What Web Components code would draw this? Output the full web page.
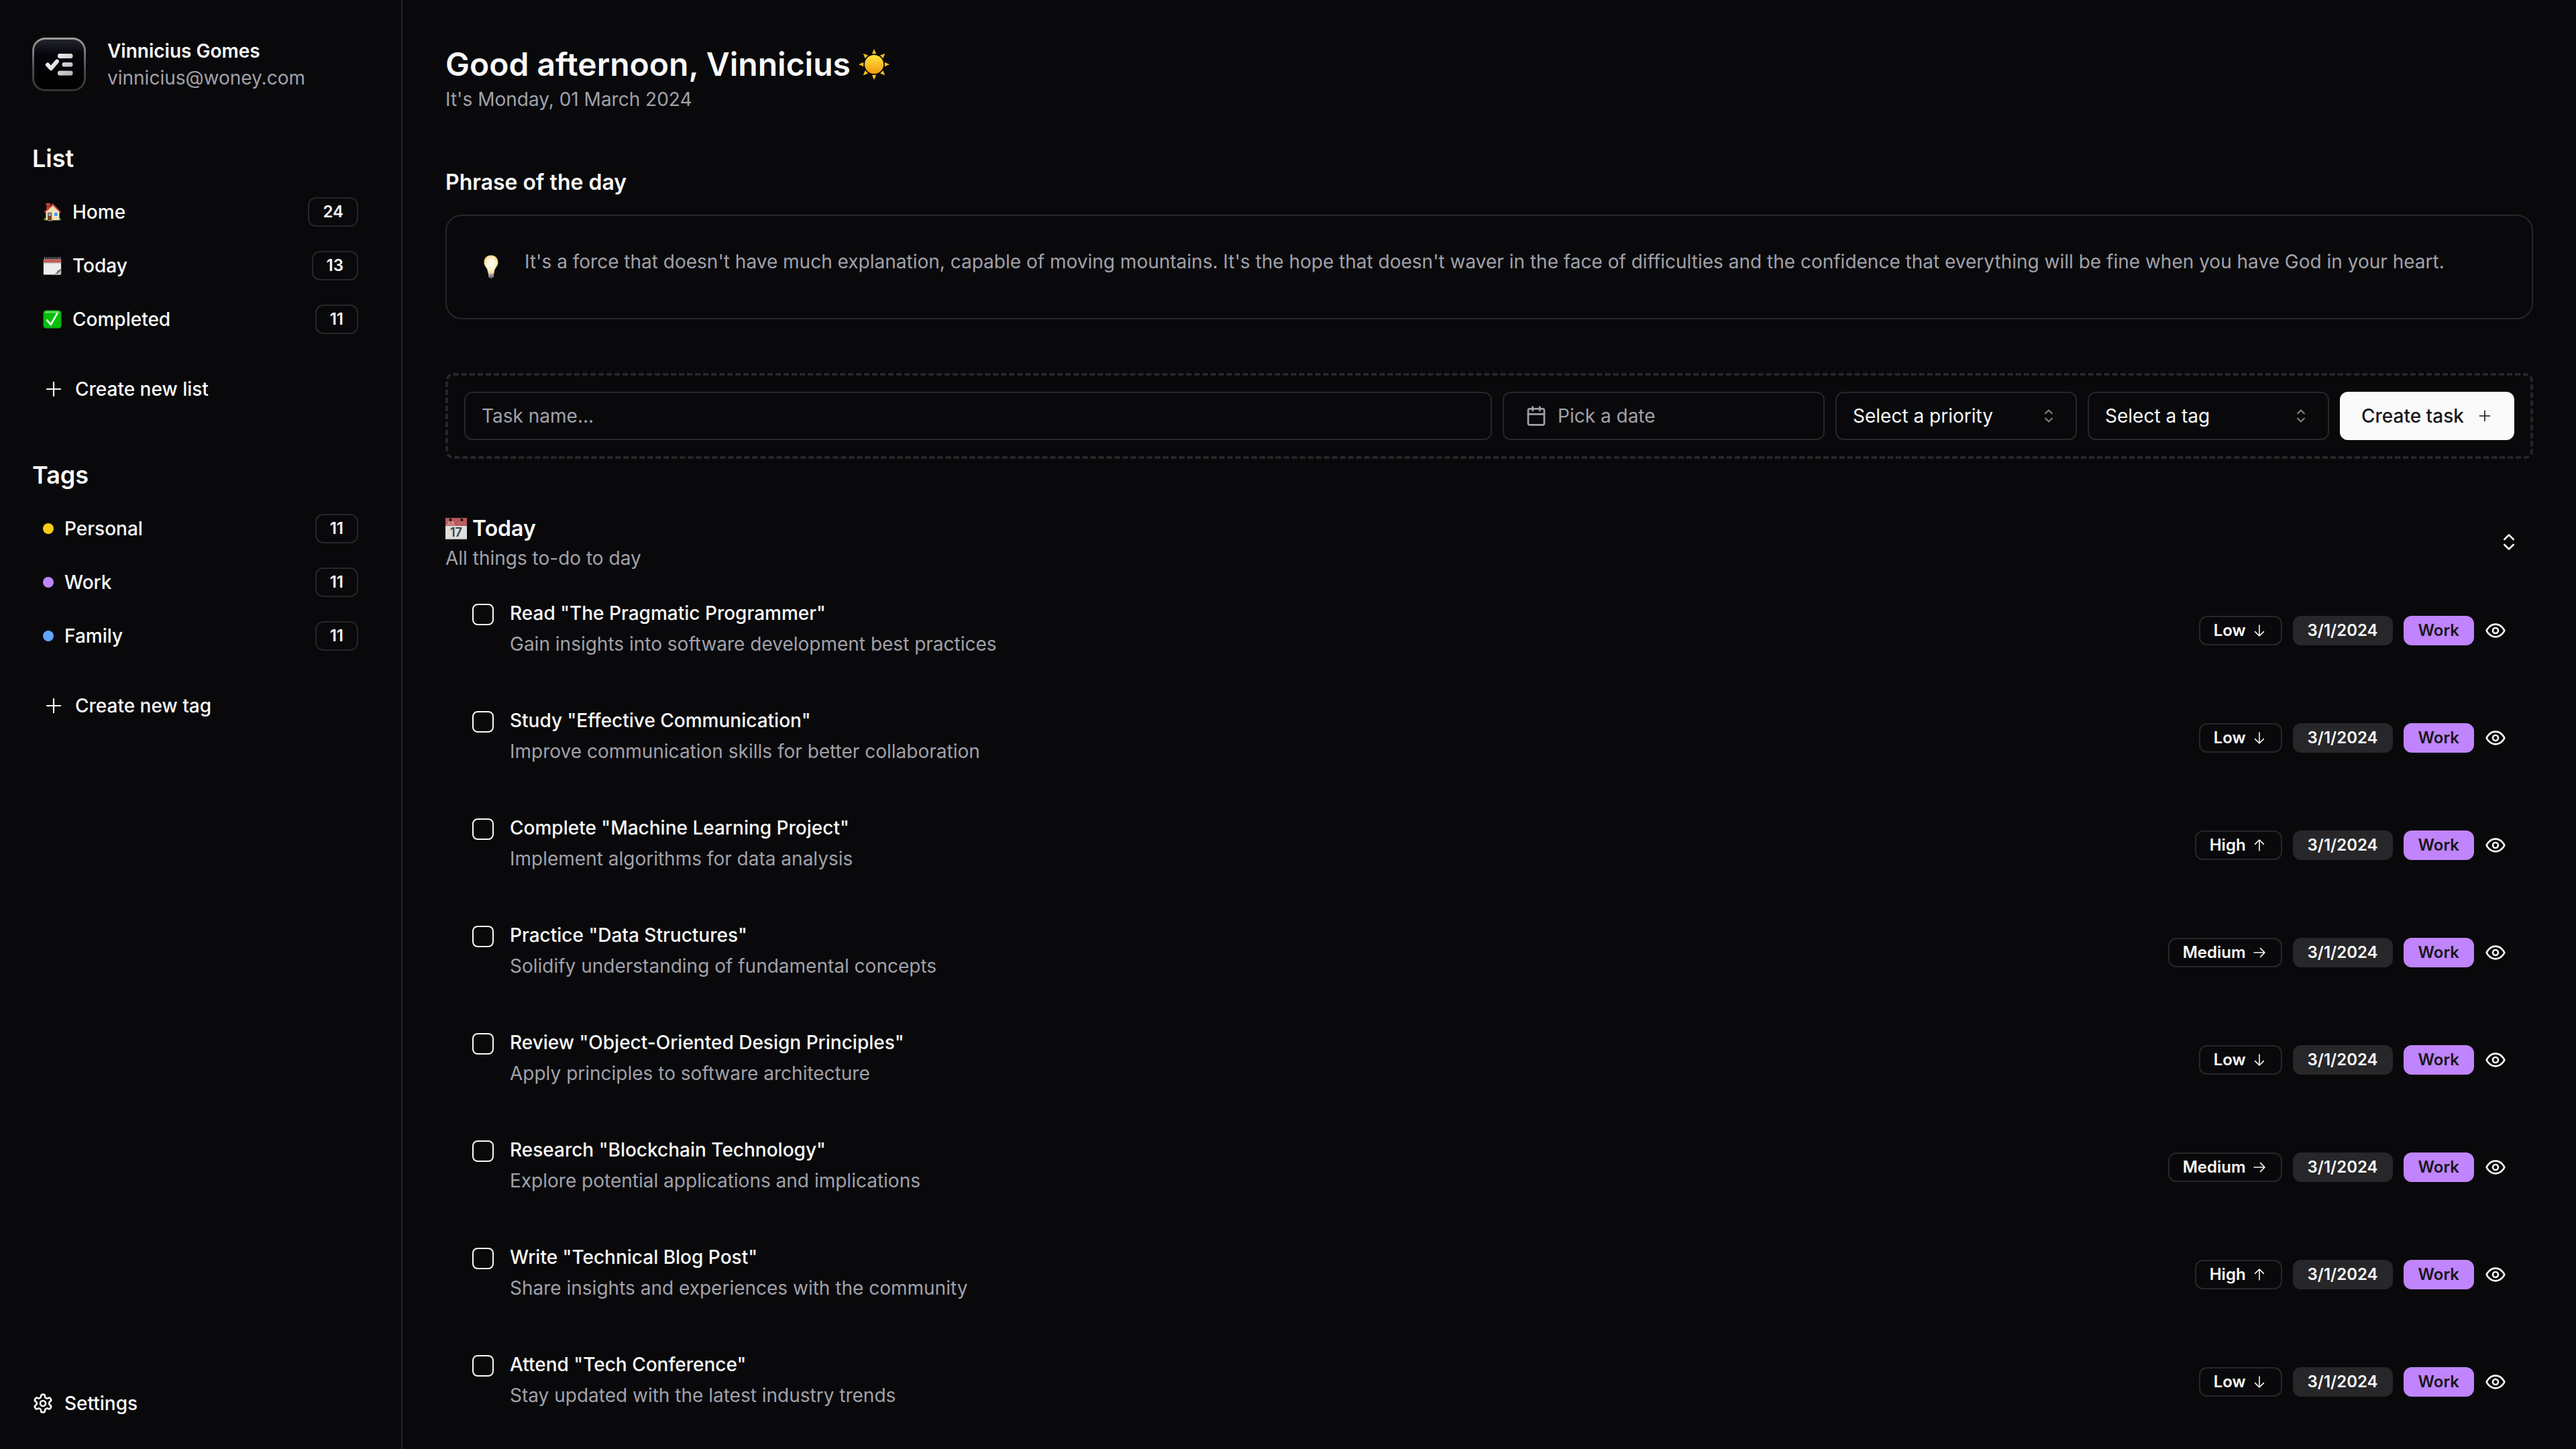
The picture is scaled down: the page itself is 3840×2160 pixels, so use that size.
<!DOCTYPE html>
<html lang="en">
<head>
<meta charset="utf-8">
<title>Tasks</title>
<style>
  html, body { height: 100%; }
  body {
    margin: 0;
    background: #09090b;
    color: #fafafa;
    font: 400 28px/40px Inter, "Liberation Sans", sans-serif;
    --border: #27272a;
    --muted: #a1a1aa;
    --text: #fafafa;
  }
</style>
</head>
<body>
<task-app>
  <app-sidebar slot="sidebar">
    <user-card slot="user" name="Vinnicius Gomes" email="vinnicius@woney.com"></user-card>
    <nav-group heading="List" action="Create new list">
      <nav-item count="24"><ui-icon slot="icon" name="home" size="28"></ui-icon>Home</nav-item>
      <nav-item count="13"><ui-icon slot="icon" name="notepad" size="28"></ui-icon>Today</nav-item>
      <nav-item count="11"><ui-icon slot="icon" name="done" size="28"></ui-icon>Completed</nav-item>
    </nav-group>
    <nav-group heading="Tags" action="Create new tag">
      <nav-item count="11"><color-dot slot="icon" color="#facc15"></color-dot>Personal</nav-item>
      <nav-item count="11"><color-dot slot="icon" color="#c084fc"></color-dot>Work</nav-item>
      <nav-item count="11"><color-dot slot="icon" color="#60a5fa"></color-dot>Family</nav-item>
    </nav-group>
  </app-sidebar>

  <page-greeting heading="Good afternoon, Vinnicius" icon="sun">It's Monday, 01 March 2024</page-greeting>
  <phrase-card heading="Phrase of the day">It's a force that doesn't have much explanation, capable of moving mountains. It's the hope that doesn't waver in the face of difficulties and the confidence that everything will be fine when you have God in your heart.</phrase-card>
  <task-form></task-form>
  <task-list heading="Today" description="All things to-do to day">
    <task-item priority="Low" date="3/1/2024" tag="Work" heading='Read "The Pragmatic Programmer"'>Gain insights into software development best practices</task-item>
    <task-item priority="Low" date="3/1/2024" tag="Work" heading='Study "Effective Communication"'>Improve communication skills for better collaboration</task-item>
    <task-item priority="High" date="3/1/2024" tag="Work" heading='Complete "Machine Learning Project"'>Implement algorithms for data analysis</task-item>
    <task-item priority="Medium" date="3/1/2024" tag="Work" heading='Practice "Data Structures"'>Solidify understanding of fundamental concepts</task-item>
    <task-item priority="Low" date="3/1/2024" tag="Work" heading='Review "Object-Oriented Design Principles"'>Apply principles to software architecture</task-item>
    <task-item priority="Medium" date="3/1/2024" tag="Work" heading='Research "Blockchain Technology"'>Explore potential applications and implications</task-item>
    <task-item priority="High" date="3/1/2024" tag="Work" heading='Write "Technical Blog Post"'>Share insights and experiences with the community</task-item>
    <task-item priority="Low" date="3/1/2024" tag="Work" heading='Attend "Tech Conference"'>Stay updated with the latest industry trends</task-item>
  </task-list>
</task-app>

<script>
const RESET = `
  *, *::before, *::after { box-sizing: border-box; }
  h1, h2, h3, p { margin: 0; }
  a { color: inherit; text-decoration: none; }
  button, input, select { font: inherit; color: inherit; background: none; border: 0; margin: 0; padding: 0; }
  button { cursor: pointer; }
`;

class Base extends HTMLElement {
  connectedCallback() {
    if (this.shadowRoot) return;
    const root = this.attachShadow({ mode: 'open' });
    root.innerHTML = `<style>${RESET}${this.styles()}</style>${this.view()}`;
  }
  attr(name) {
    return (this.getAttribute(name) || '').replace(/&/g, '&amp;').replace(/</g, '&lt;');
  }
  styles() { return ':host { display: block; }'; }
  view() { return '<slot></slot>'; }
}

/* Line icons use a 24 unit box, thin icons a 15 unit box, pictograms a 32 unit box. */
const line = d => ({ box: 24, body: `<g fill="none" stroke="currentColor" stroke-width="2" stroke-linecap="round" stroke-linejoin="round">${d}</g>` });
const thin = d => ({ box: 15, body: `<g fill="none" stroke="currentColor" stroke-width="1" stroke-linecap="round" stroke-linejoin="round">${d}</g>` });
const art = d => ({ box: 32, body: d });

const ICONS = {
  plus: thin('<path d="M7.5 2.75v9.5M2.75 7.5h9.5"/>'),
  caret: thin('<path d="M5.25 5.75 7.5 3.5l2.25 2.25M5.25 9.25 7.5 11.5l2.25-2.25"/>'),
  Low: thin('<path d="M7.5 2.5v10M3.5 8.5l4 4 4-4"/>'),
  High: thin('<path d="M7.5 12.5v-10M3.5 6.5l4-4 4 4"/>'),
  Medium: thin('<path d="M2.5 7.5h10M8.5 3.5l4 4-4 4"/>'),
  chevrons: line('<path d="m7 15 5 5 5-5M7 9l5-5 5 5"/>'),
  eye: line('<path d="M2 12s3-7 10-7 10 7 10 7-3 7-10 7-10-7-10-7Z"/><circle cx="12" cy="12" r="3"/>'),
  calendar: line('<rect x="3" y="4" width="18" height="18" rx="2"/><path d="M16 2v4M8 2v4M3 10h18"/>'),
  settings: line('<path d="M12.22 2h-.44a2 2 0 0 0-2 2v.18a2 2 0 0 1-1 1.73l-.43.25a2 2 0 0 1-2 0l-.15-.08a2 2 0 0 0-2.73.73l-.22.38a2 2 0 0 0 .73 2.73l.15.1a2 2 0 0 1 1 1.72v.51a2 2 0 0 1-1 1.74l-.15.09a2 2 0 0 0-.73 2.73l.22.38a2 2 0 0 0 2.73.73l.15-.08a2 2 0 0 1 2 0l.43.25a2 2 0 0 1 1 1.73V20a2 2 0 0 0 2 2h.44a2 2 0 0 0 2-2v-.18a2 2 0 0 1 1-1.73l.43-.25a2 2 0 0 1 2 0l.15.08a2 2 0 0 0 2.73-.73l.22-.39a2 2 0 0 0-.73-2.73l-.15-.08a2 2 0 0 1-1-1.74v-.5a2 2 0 0 1 1-1.74l.15-.09a2 2 0 0 0 .73-2.73l-.22-.38a2 2 0 0 0-2.73-.73l-.15.08a2 2 0 0 1-2 0l-.43-.25a2 2 0 0 1-1-1.73V4a2 2 0 0 0-2-2z"/><circle cx="12" cy="12" r="3"/>'),
  home: art(`
    <path d="M1 30q0-4 3-4h24q3 0 3 4z" fill="#4c8a2b"/>
    <path d="M6 2h6v8l-6 4z" fill="#a83a2c"/><path d="M5 1h8v3H5z" fill="#c14a38"/>
    <path d="M5 15 17 4l11 11v15H5z" fill="#f3dfb4"/>
    <path d="M1.500 16 17 1.500 31 16l-1.500 1.500L17 5 3 17.500z" fill="#c9402f"/>
    <rect x="8" y="17" width="7" height="13" fill="#7a4322"/><rect x="9.500" y="18.500" width="4" height="4" fill="#8ec5e8"/>
    <rect x="18" y="16" width="8" height="8" fill="#fff"/><rect x="19" y="17" width="6" height="6" fill="#4f9fd8"/>
    <path d="M8 30h8v1.500H8z" fill="#8b8b8b"/>`),
  notepad: art(`
    <path d="M1 5h30v23.500q-1 2-3 3H1z" fill="#ededed"/>
    <path d="M1 5h30v6H1z" fill="#c25b56"/>
    <path d="M1 11h30v1H1z" fill="#a8a8a8"/>
    <path d="M31 20q-2 4-6 4-2 7-8 7.500h14z" fill="#c9c9c9"/>
    <path d="M31 20q-2 4-6 4-2 6-7 7.500 9-1 13-8z" fill="#777"/>
    <path d="M3 1v5M6 1v5M9 1v5M12 1v5M15 1v5M18 1v5M21 1v5M24 1v5M27 1v5M29.500 1v5" stroke="#8d8d8d" stroke-width="1.200"/>`),
  done: art(`
    <rect x=".5" y=".5" width="31" height="31" rx="5" fill="#08a60c"/>
    <rect x="2" y="2" width="28" height="28" rx="4" fill="#06bf0b"/>
    <path d="M3 6q0-4 4-4h18q4 0 4 4-13-2-26 0z" fill="#5fdc5f"/>
    <path d="M7 17.500 13.500 25 24 6.500" fill="none" stroke="#fff" stroke-width="3" stroke-linecap="round" stroke-linejoin="round"/>`),
  sun: art(`
    <defs><linearGradient id="s" x1="0" y1="0" x2="0" y2="1"><stop offset="0" stop-color="#ffe53a"/><stop offset="1" stop-color="#f19a12"/></linearGradient></defs>
    <g fill="#f9bd22"><path d="m16 0 2.200 5h-4.400z"/>
    <path d="m16 0 2.200 5h-4.400z" transform="rotate(45 16 16)"/><path d="m16 0 2.200 5h-4.400z" transform="rotate(90 16 16)"/>
    <path d="m16 0 2.200 5h-4.400z" transform="rotate(135 16 16)"/><path d="m16 0 2.200 5h-4.400z" transform="rotate(180 16 16)"/>
    <path d="m16 0 2.200 5h-4.400z" transform="rotate(225 16 16)"/><path d="m16 0 2.200 5h-4.400z" transform="rotate(270 16 16)"/>
    <path d="m16 0 2.200 5h-4.400z" transform="rotate(315 16 16)"/></g>
    <circle cx="16" cy="16" r="9.800" fill="url(#s)"/>`),
  bulb: art(`
    <defs><radialGradient id="b" cx=".5" cy=".5" r=".55"><stop offset="0" stop-color="#fffdf3"/><stop offset=".6" stop-color="#fff3cf"/><stop offset="1" stop-color="#f2cf72"/></radialGradient>
    <linearGradient id="c" x1="0" y1="0" x2="0" y2="1"><stop offset="0" stop-color="#d8d3cc"/><stop offset="1" stop-color="#4a4846"/></linearGradient></defs>
    <path d="M12.400 24h7.200v4.500q0 1.500-1.800 2-1.800 1.800-3.600 0-1.800-.5-1.800-2z" fill="url(#c)"/>
    <path d="M16 .5c5.600 0 9.300 4.200 9.300 9.200 0 4.300-2.800 6.300-4.100 9.300-.9 2-.8 3.500-1.200 5.200h-8c-.4-1.700-.3-3.200-1.200-5.200-1.300-3-4.100-5-4.100-9.300C6.700 4.700 10.400.5 16 .5z" fill="url(#b)"/>
    <path d="M12.400 26.300h7.200M12.600 28.300h6.800" stroke="#8d8984" stroke-width=".6"/>`),
  date: art(`
    <rect width="32" height="32" fill="#dedede"/><rect width="32" height="12" fill="#b5595a"/>
    <path d="M0 30.500h32V32H0z" fill="#c4c4c4"/>
    <circle cx="7.500" cy="3" r="2" fill="#1d1214"/><circle cx="24.500" cy="3" r="2" fill="#1d1214"/>
    <path d="M7.500 0v3M22.500 0l2 3" stroke="#1d1214" stroke-width="1"/>
    <path d="M18 9h12M18 7h12" stroke="#c06a6a" stroke-width="1"/>
    <text x="1.500" y="11" font-family="Inter, sans-serif" font-size="7" font-weight="600" fill="#e3b5b4">JUL</text>
    <text x="16" y="28" text-anchor="middle" font-family="Inter, sans-serif" font-size="18" fill="#3d3d3f">17</text>`),
  logo: { box: 80, body: `
    <defs>
      <linearGradient id="e" x1="0" y1="0" x2="0" y2="1"><stop offset="0" stop-color="#9b9b9b"/><stop offset=".6" stop-color="#4a4a4a"/><stop offset="1" stop-color="#343434"/></linearGradient>
      <linearGradient id="f" x1="0" y1="0" x2="0" y2="1"><stop offset="0" stop-color="#262630"/><stop offset=".3" stop-color="#05050c"/><stop offset="1" stop-color="#000"/></linearGradient>
      <linearGradient id="g" gradientUnits="userSpaceOnUse" x1="22" y1="24" x2="60" y2="56"><stop offset="0" stop-color="#fff"/><stop offset="1" stop-color="#b4b4b4"/></linearGradient>
    </defs>
    <rect x="1.500" y="1.500" width="77" height="77" rx="18" fill="url(#f)" stroke="url(#e)" stroke-width="3"/>
    <g fill="url(#g)"><rect x="38" y="24" width="22.500" height="7" rx="3"/><rect x="44.500" y="37" width="16" height="6.500" rx="3"/><rect x="38" y="49.500" width="22.500" height="7" rx="3"/></g>
    <path d="m23 40.500 5 5.500 9-10.500" fill="none" stroke="url(#g)" stroke-width="6" stroke-linecap="round" stroke-linejoin="round"/>` }
};

customElements.define('ui-icon', class extends Base {
  styles() {
    const s = Number(this.getAttribute('size') || 32);
    return `:host { display: block; flex: none; width: ${s}px; height: ${s}px; } svg { display: block; width: 100%; height: 100%; }`;
  }
  view() {
    const i = ICONS[this.getAttribute('name')];
    return `<svg viewBox="0 0 ${i.box} ${i.box}" aria-hidden="true">${i.body}</svg>`;
  }
});

customElements.define('color-dot', class extends Base {
  styles() { return `:host { display: block; flex: none; width: 16px; height: 16px; border-radius: 50%; background: ${this.attr('color')}; }`; }
  view() { return ''; }
});

customElements.define('ui-badge', class extends Base {
  styles() {
    return `
      :host { display: inline-flex; align-items: center; gap: 8px; height: 44px; padding: 0 20px; border: 2px solid var(--border); border-radius: 12px;
        font-size: 24px; line-height: 32px; font-weight: 600; white-space: nowrap; }
      :host([kind="fill"]) { background: #27272a; }
      :host([kind="tag"]) { background: #c084fc; border-color: #c084fc; color: #18181b; }`;
  }
});

customElements.define('task-app', class extends Base {
  styles() {
    return `
      :host { display: grid; grid-template-columns: 600px minmax(0, 1fr); min-height: 100vh; }
      aside { border-right: 2px solid var(--border); display: flex; height: 100vh; position: sticky; top: 0; }
      ::slotted([slot="sidebar"]) { flex: 1; }
      main { padding: 64px 64px 20px; display: flex; flex-direction: column; gap: 80px; }`;
  }
  view() { return '<aside><slot name="sidebar"></slot></aside><main><slot></slot></main>'; }
});

customElements.define('app-sidebar', class extends Base {
  styles() {
    return `
      :host { display: flex; flex-direction: column; padding: 56px 48px 32px; }
      nav { display: flex; flex-direction: column; gap: 64px; margin-top: 72px; flex: 1; }
      a { display: flex; align-items: center; gap: 16px; height: 72px; font-weight: 500; }`;
  }
  view() {
    return `<slot name="user"></slot><nav aria-label="Main"><slot></slot></nav>
      <a href="#settings"><ui-icon name="settings"></ui-icon>Settings</a>`;
  }
});

customElements.define('user-card', class extends Base {
  styles() {
    return `
      :host { display: flex; align-items: center; gap: 32px; }
      .name { font-weight: 600; } .email { color: var(--muted); }`;
  }
  view() {
    return `<ui-icon name="logo" size="80"></ui-icon>
      <div><p class="name">${this.attr('name')}</p><p class="email">${this.attr('email')}</p></div>`;
  }
});

customElements.define('nav-group', class extends Base {
  styles() {
    return `
      :host { display: block; }
      h2 { font-size: 36px; line-height: 56px; font-weight: 600; margin-bottom: 16px; }
      .items { display: flex; flex-direction: column; gap: 8px; }
      button { display: flex; align-items: center; gap: 16px; height: 72px; padding: 0 16px; margin-top: 32px; font-weight: 500; }`;
  }
  view() {
    return `<h2>${this.attr('heading')}</h2><div class="items"><slot></slot></div>
      <button type="button"><ui-icon name="plus"></ui-icon>${this.attr('action')}</button>`;
  }
});

customElements.define('nav-item', class extends Base {
  styles() {
    return `
      :host { display: block; }
      a { display: flex; align-items: center; gap: 16px; height: 72px; padding: 0 16px; font-weight: 500; }
      span { flex: 1; }`;
  }
  view() {
    return `<a href="#"><slot name="icon"></slot><span><slot></slot></span><ui-badge>${this.attr('count')}</ui-badge></a>`;
  }
});

customElements.define('page-greeting', class extends Base {
  styles() {
    return `
      :host { display: block; }
      h1 { display: flex; align-items: center; gap: 12px; font-size: 48px; line-height: 64px; font-weight: 600; }
      p { color: var(--muted); }`;
  }
  view() { return `<h1>${this.attr('heading')}<ui-icon name="${this.attr('icon')}" size="46"></ui-icon></h1><p><slot></slot></p>`; }
});

customElements.define('phrase-card', class extends Base {
  styles() {
    return `
      :host { display: block; }
      h2 { font-size: 32px; line-height: 48px; font-weight: 600; margin-bottom: 24px; }
      .card { display: flex; gap: 32px; padding: 48px; border: 2px solid var(--border); border-radius: 24px; }
      .bulb { display: flex; align-items: center; height: 56px; }
      p { color: var(--muted); }`;
  }
  view() {
    return `<h2>${this.attr('heading')}</h2>
      <div class="card"><div class="bulb"><ui-icon name="bulb" size="36"></ui-icon></div><p><slot></slot></p></div>`;
  }
});

customElements.define('task-form', class extends Base {
  styles() {
    return `
      :host { display: block; }
      form { display: flex; gap: 16px; padding: 24px; border: 4px dashed var(--border); border-radius: 12px; }
      input, .date, select { height: 72px; border: 2px solid var(--border); border-radius: 12px; }
      input { flex: 1; min-width: 0; padding: 0 24px; }
      input::placeholder { color: var(--muted); opacity: 1; }
      .date { display: flex; align-items: center; gap: 16px; width: 480px; padding: 0 32px; color: var(--muted); }
      .select { display: grid; width: 360px; align-items: center; }
      .select > * { grid-area: 1 / 1; }
      select { appearance: none; width: 100%; padding: 0 64px 0 24px; }
      .select ui-icon { justify-self: end; margin-right: 26px; opacity: .5; pointer-events: none; }
      .create { display: flex; align-items: center; justify-content: space-between; gap: 16px; min-width: 260px; height: 72px; padding: 0 32px; border-radius: 12px; background: #fafafa; color: #18181b; font-weight: 500; }`;
  }
  view() {
    return `<form>
      <input type="text" aria-label="Task name" placeholder="Task name...">
      <button class="date" type="button"><ui-icon name="calendar"></ui-icon>Pick a date</button>
      <div class="select"><select aria-label="Priority"><option>Select a priority</option></select><ui-icon name="caret"></ui-icon></div>
      <div class="select"><select aria-label="Tag"><option>Select a tag</option></select><ui-icon name="caret"></ui-icon></div>
      <button class="create" type="button">Create task<ui-icon name="plus" size="24"></ui-icon></button>
    </form>`;
  }
});

customElements.define('task-list', class extends Base {
  styles() {
    return `
      :host { display: block; }
      header { display: flex; align-items: center; justify-content: space-between; margin-bottom: 8px; }
      h2 { display: flex; align-items: center; gap: 8px; font-size: 32px; line-height: 48px; font-weight: 600; }
      p { color: var(--muted); }
      button { display: flex; align-items: center; justify-content: center; width: 72px; height: 72px; }`;
  }
  view() {
    return `<header><div><h2><ui-icon name="date"></ui-icon>${this.attr('heading')}</h2><p>${this.attr('description')}</p></div>
      <button type="button" aria-label="Toggle list"><ui-icon name="chevrons"></ui-icon></button></header><slot></slot>`;
  }
});

customElements.define('task-item', class extends Base {
  styles() {
    return `
      :host { display: flex; align-items: center; justify-content: space-between; gap: 32px; padding: 40px; }
      .task, .meta { display: flex; gap: 24px; }
      .meta { align-items: center; gap: 16px; }
      input { appearance: none; flex: none; width: 32px; height: 32px; border: 2px solid var(--text); border-radius: 8px; }
      label { display: block; line-height: 28px; font-weight: 500; margin-bottom: 12px; }
      p { color: var(--muted); }`;
  }
  view() {
    const p = this.attr('priority');
    return `<div class="task"><input type="checkbox" id="done"><div><label for="done">${this.attr('heading')}</label><p><slot></slot></p></div></div>
      <div class="meta"><ui-badge>${p}<ui-icon name="${p}" size="24"></ui-icon></ui-badge>
      <ui-badge kind="fill">${this.attr('date')}</ui-badge><ui-badge kind="tag">${this.attr('tag')}</ui-badge>
      <button type="button" aria-label="View task"><ui-icon name="eye"></ui-icon></button></div>`;
  }
});
</script>
</body>
</html>
